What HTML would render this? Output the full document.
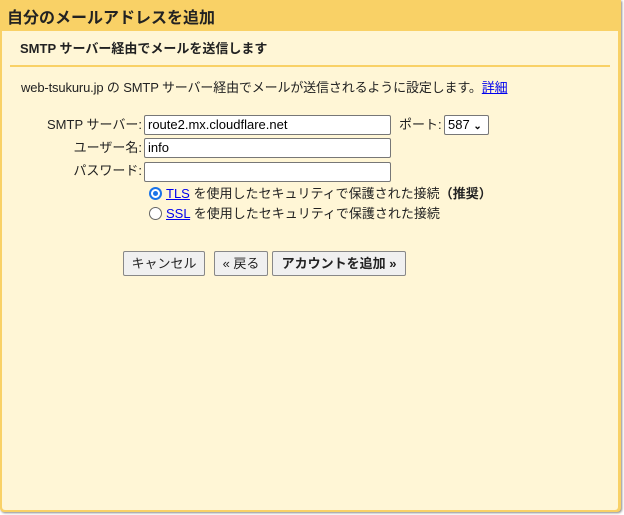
<!DOCTYPE html>
<html><head><meta charset="utf-8"><style>
*{box-sizing:border-box;margin:0;padding:0}
body{width:624px;height:515px;background:#fff;font-family:"Liberation Sans","Noto Sans CJK JP",sans-serif;font-size:13px;color:#222;position:relative;overflow:hidden}
#frame{position:absolute;left:0;top:0;width:621px;height:512px;background:#f9d166;border-radius:0 0 4px 4px;box-shadow:1px 1px 2px #888}
#title{position:absolute;left:7px;top:4px;font-size:16px;font-weight:bold;color:#222}
#inner{position:absolute;left:2px;top:31px;width:616px;height:479px;background:#fff6d6;border-radius:0 0 3px 3px}
.a{position:absolute;white-space:nowrap;line-height:16px}
.inp{position:absolute;height:20px;background:#fff;border:1px solid #777;border-radius:2px;padding-left:3px;font-size:13px;line-height:18px;color:#000}
.lbl{position:absolute;text-align:right;width:130px;left:12px}
.btn{position:absolute;top:251px;height:25px;background:#f0f0f0;border:1px solid #888;border-radius:2px;font-size:13px;line-height:23px;text-align:center;color:#222}
a{color:#00e}
.rad{position:absolute;width:13px;height:13px;border-radius:50%;border:1px solid #666;background:#fff}
</style></head><body>
<div id="frame"></div>
<div id="title">自分のメールアドレスを追加</div>
<div id="inner"></div>
<div class="a" style="left:20px;top:41px;font-weight:bold;font-size:13px">SMTP サーバー経由でメールを送信します</div>
<div class="a" style="left:10px;top:65px;width:600px;height:2px;background:#f9d166"></div>
<div class="a" style="left:21px;top:80px;letter-spacing:-0.15px">web-tsukuru.jp の SMTP サーバー経由でメールが送信されるように設定します。<a href="#">詳細</a></div>
<div class="lbl a" style="top:117px">SMTP サーバー:</div>
<div class="inp" style="left:144px;top:115px;width:247px">route2.mx.cloudflare.net</div>
<div class="a" style="left:399px;top:117px">ポート:</div>
<div class="inp" style="left:444px;top:115px;width:45px;padding-left:3px">587 <span style="font-size:10px;font-weight:bold">&#8964;</span></div>
<div class="lbl a" style="top:140px">ユーザー名:</div>
<div class="inp" style="left:144px;top:138px;width:247px">info</div>
<div class="lbl a" style="top:163px">パスワード:</div>
<div class="inp" style="left:144px;top:162px;width:247px"></div>
<div class="rad" style="left:149px;top:187px;border:2px solid #1a73e8;"><div style="position:absolute;left:2px;top:2px;width:5px;height:5px;border-radius:50%;background:#1a73e8"></div></div>
<div class="a" style="left:166px;top:186px"><a href="#">TLS</a> を使用したセキュリティで保護された接続<b>（推奨）</b></div>
<div class="rad" style="left:149px;top:207px"></div>
<div class="a" style="left:166px;top:206px"><a href="#">SSL</a> を使用したセキュリティで保護された接続</div>
<div class="btn" style="left:123px;width:82px">キャンセル</div>
<div class="btn" style="left:214px;width:54px">« 戻る</div>
<div class="btn" style="left:272px;width:134px;font-weight:bold">アカウントを追加 »</div>
</body></html>
